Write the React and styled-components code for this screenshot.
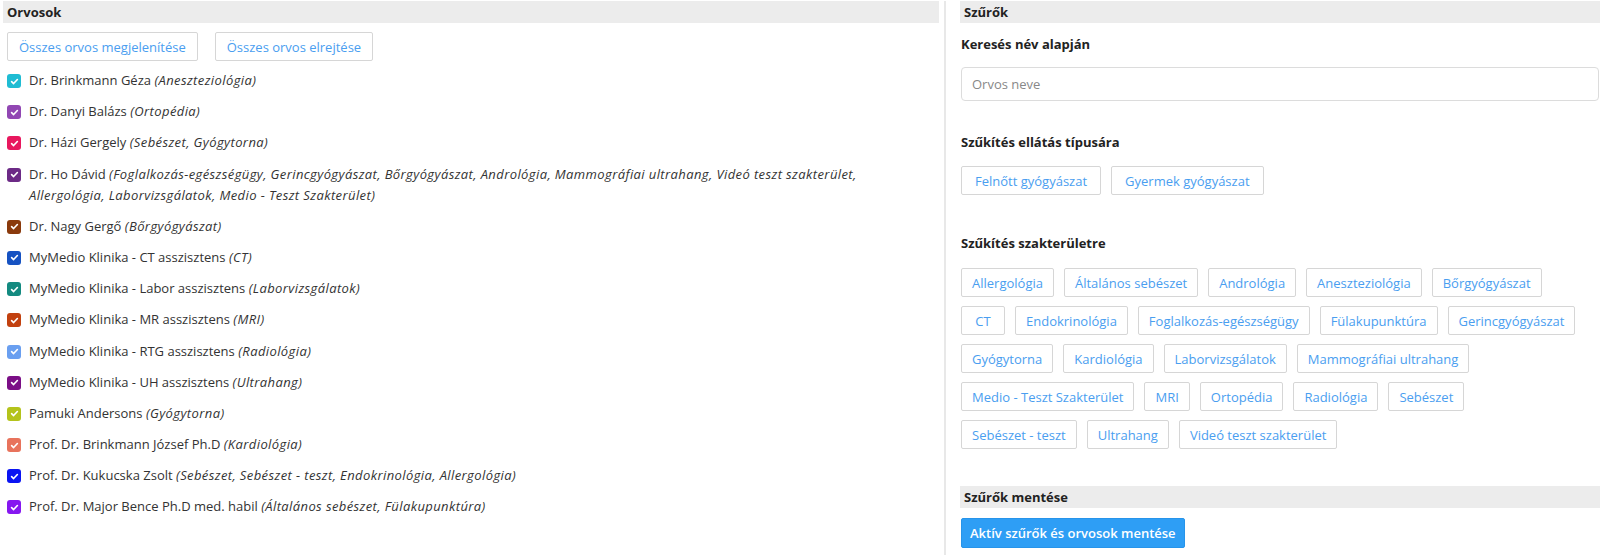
import React from 'react'
import styled, { createGlobalStyle } from 'styled-components'

const doctors = [
  { name: 'Dr. Brinkmann Géza', spec: 'Aneszteziológia', color: '#1fbcd3' },
  { name: 'Dr. Danyi Balázs', spec: 'Ortopédia', color: '#9147b3' },
  { name: 'Dr. Házi Gergely', spec: 'Sebészet, Gyógytorna', color: '#e8185e' },
  {
    name: 'Dr. Ho Dávid',
    spec: 'Foglalkozás-egészségügy, Gerincgyógyászat, Bőrgyógyászat, Andrológia, Mammográfiai ultrahang, Videó teszt szakterület, Allergológia, Laborvizsgálatok, Medio - Teszt Szakterület',
    color: '#6c2a86',
  },
  { name: 'Dr. Nagy Gergő', spec: 'Bőrgyógyászat', color: '#8a3a0c' },
  { name: 'MyMedio Klinika - CT asszisztens', spec: 'CT', color: '#1652c2' },
  { name: 'MyMedio Klinika - Labor asszisztens', spec: 'Laborvizsgálatok', color: '#138a80' },
  { name: 'MyMedio Klinika - MR asszisztens', spec: 'MRI', color: '#c2410f' },
  { name: 'MyMedio Klinika - RTG asszisztens', spec: 'Radiológia', color: '#6a9ff0' },
  { name: 'MyMedio Klinika - UH asszisztens', spec: 'Ultrahang', color: '#7b0f86' },
  { name: 'Pamuki Andersons', spec: 'Gyógytorna', color: '#b4c31b' },
  { name: 'Prof. Dr. Brinkmann József Ph.D', spec: 'Kardiológia', color: '#e8735c' },
  { name: 'Prof. Dr. Kukucska Zsolt', spec: 'Sebészet, Sebészet - teszt, Endokrinológia, Allergológia', color: '#0a14f2' },
  { name: 'Prof. Dr. Major Bence Ph.D med. habil', spec: 'Általános sebészet, Fülakupunktúra', color: '#8617f0' },
]

const specialties = [
  'Allergológia', 'Általános sebészet', 'Andrológia', 'Aneszteziológia', 'Bőrgyógyászat',
  'CT', 'Endokrinológia', 'Foglalkozás-egészségügy', 'Fülakupunktúra', 'Gerincgyógyászat',
  'Gyógytorna', 'Kardiológia', 'Laborvizsgálatok', 'Mammográfiai ultrahang',
  'Medio - Teszt Szakterület', 'MRI', 'Ortopédia', 'Radiológia', 'Sebészet',
  'Sebészet - teszt', 'Ultrahang', 'Videó teszt szakterület',
]

const GlobalStyle = createGlobalStyle`
  body {
    margin: 0;
    background: #fff;
    font-family: 'Open Sans', 'Noto Sans', sans-serif;
    font-size: 13px;
    color: #333;
  }
`

const Page = styled.div`
  display: flex;
  height: 557px;
  padding-top: 1px;
  box-sizing: border-box;
`

const LeftCol = styled.div`
  width: 936px;
  padding-left: 3px;
`

const RightCol = styled.div`
  flex: 1;
  margin-left: 5px;
  border-left: 2px solid #e8e8e8;
  padding-left: 14px;
  height: 554px;
`

const SectionHead = styled.div`
  background: #ececec;
  height: 22px;
  line-height: 22px;
  padding: 0 4px;
  font-weight: 700;
  font-size: 13px;
  color: #222;
  margin-top: ${(p) => p.$top || 0}px;
`

const Body = styled.div`
  padding: 0 ${(p) => p.$pad || 4}px;
`

const BtnRow = styled.div`
  display: flex;
  flex-wrap: wrap;
  row-gap: 9px;
  margin-top: ${(p) => p.$top || 0}px;
`

const OutlineBtn = styled.button`
  font-family: inherit;
  font-size: 13px;
  height: 29px;
  min-width: 44px;
  padding: 0 ${(p) => p.$pad || 10}px;
  margin-right: ${(p) => p.$gap || 10}px;
  background: #fff;
  color: #4a9ef0;
  border: 1px solid #d6d6d6;
  border-radius: 2px;
  cursor: pointer;
`

const List = styled.ul`
  list-style: none;
  margin: 9px 0 0;
  padding: 0;
`

const Item = styled.li`
  display: flex;
  align-items: flex-start;
  line-height: 21px;
  margin-bottom: 10.2px;
  padding-right: 40px;
`

const Check = styled.span`
  flex: none;
  width: 14px;
  height: 14px;
  margin-top: 4px;
  margin-right: 8px;
  border-radius: 3px;
  background: ${(p) => p.$color};
  display: flex;
  align-items: center;
  justify-content: center;
`

const Spec = styled.i`
  font-style: italic;
  letter-spacing: 0.4px;
`

const Label = styled.div`
  font-weight: 700;
  font-size: 13px;
  color: #222;
  margin-top: ${(p) => p.$top}px;
`

const Input = styled.input`
  display: block;
  width: 100%;
  box-sizing: border-box;
  height: 34px;
  margin-top: 14px;
  padding: 0 10px;
  border: 1px solid #dcdcdc;
  border-radius: 4px;
  font-family: inherit;
  font-size: 13px;
  color: #333;
  &::placeholder {
    color: #888;
  }
`

const PrimaryBtn = styled.button`
  margin-top: 10px;
  height: 30px;
  padding: 0 8px;
  font-family: inherit;
  font-size: 13px;
  font-weight: 600;
  color: #fff;
  background: #2e9ef5;
  border: 1px solid #2794ea;
  border-radius: 2px;
  cursor: pointer;
`

const Tick = () => (
  <svg width="9" height="9" viewBox="0 0 10 10">
    <path d="M1.8 5.2 L4 7.3 L8.2 2.8" fill="none" stroke="#fff" strokeWidth="1.8" strokeLinecap="round" strokeLinejoin="round" />
  </svg>
)

export default function App() {
  return (
    <>
      <GlobalStyle />
      <Page>
        <LeftCol>
          <SectionHead>Orvosok</SectionHead>
          <Body>
            <BtnRow $top={9}>
              <OutlineBtn $gap={17} $pad={11}>Összes orvos megjelenítése</OutlineBtn>
              <OutlineBtn $pad={11}>Összes orvos elrejtése</OutlineBtn>
            </BtnRow>
            <List>
              {doctors.map((d) => (
                <Item key={d.name}>
                  <Check $color={d.color}>
                    <Tick />
                  </Check>
                  <span>
                    {d.name} <Spec>({d.spec})</Spec>
                  </span>
                </Item>
              ))}
            </List>
          </Body>
        </LeftCol>
        <RightCol>
          <SectionHead>Szűrők</SectionHead>
          <Body $pad={1}>
            <Label $top={12}>Keresés név alapján</Label>
            <Input placeholder="Orvos neve" />
            <Label $top={32}>Szűkítés ellátás típusára</Label>
            <BtnRow $top={15}>
              <OutlineBtn $pad={13}>Felnőtt gyógyászat</OutlineBtn>
              <OutlineBtn $pad={13}>Gyermek gyógyászat</OutlineBtn>
            </BtnRow>
            <Label $top={39}>Szűkítés szakterületre</Label>
            <BtnRow $top={16}>
              {specialties.map((s) => (
                <OutlineBtn key={s}>{s}</OutlineBtn>
              ))}
            </BtnRow>
          </Body>
          <SectionHead $top={37}>Szűrők mentése</SectionHead>
          <Body $pad={1}>
            <PrimaryBtn>Aktív szűrők és orvosok mentése</PrimaryBtn>
          </Body>
        </RightCol>
      </Page>
    </>
  )
}
